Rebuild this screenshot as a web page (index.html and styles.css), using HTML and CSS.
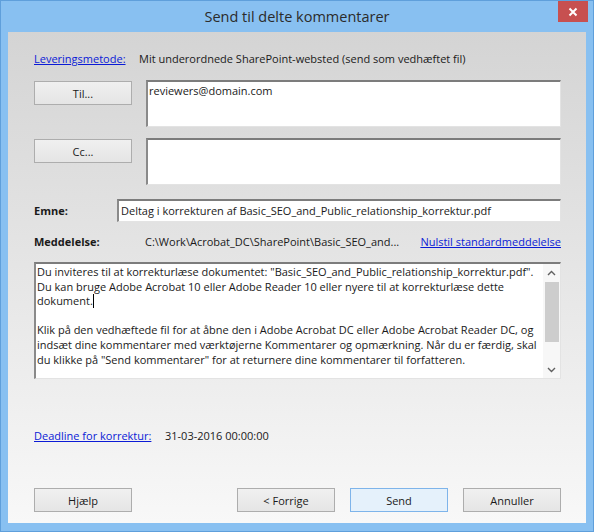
FILE: index.html
```html
<!DOCTYPE html>
<html lang="da">
<head>
<meta charset="utf-8">
<title>Send til delte kommentarer</title>
<link rel="stylesheet" href="styles.css">
</head>
<body>
<div class="window">
  <div class="titlebar">
    <div class="title">Send til delte kommentarer</div>
    <div class="close">
      <svg width="10" height="10" viewBox="0 0 10 10"><path d="M1.5 1.5 L8.5 8.5 M8.5 1.5 L1.5 8.5" stroke="#fff" stroke-width="2" fill="none"/></svg>
    </div>
  </div>
  <div class="client">
    <div class="delivery">
      <a class="link">Leveringsmetode:</a>
      <span class="value">Mit underordnede SharePoint-websted (send som vedhæftet fil)</span>
    </div>
    <div class="recip recip-to">
      <div class="btn">Til...</div>
      <div class="box tall"><span class="boxtext">reviewers@domain.com</span></div>
    </div>
    <div class="recip recip-cc">
      <div class="btn">Cc...</div>
      <div class="box tall"></div>
    </div>
    <div class="subject">
      <span class="label label-subj">Emne:</span>
      <div class="box single"><span class="boxtext">Deltag i korrekturen af Basic_SEO_and_Public_relationship_korrektur.pdf</span></div>
    </div>
    <div class="msghead">
      <span class="label label-msg">Meddelelse:</span>
      <span class="path">C:\Work\Acrobat_DC\SharePoint\Basic_SEO_and...</span>
      <a class="link">Nulstil standardmeddelelse</a>
    </div>
    <div class="message">
      <div class="msgtext">Du inviteres til at korrekturlæse dokumentet: "Basic_SEO_and_Public_relationship_korrektur.pdf".<br>Du kan bruge Adobe Acrobat 10 eller Adobe Reader 10 eller nyere til at korrekturlæse dette<br>dokument.<span class="caret"></span><br><br>Klik på den vedhæftede fil for at åbne den i Adobe Acrobat DC eller Adobe Acrobat Reader DC, og<br>indsæt dine kommentarer med værktøjerne Kommentarer og opmærkning. Når du er færdig, skal<br>du klikke på "Send kommentarer" for at returnere dine kommentarer til forfatteren.</div>
      <div class="scrollbar">
        <div class="arrow">
          <svg width="9" height="6" viewBox="0 0 9 6"><polyline points="1,5 4.5,1.5 8,5" stroke="#606060" stroke-width="1.4" fill="none"/></svg>
        </div>
        <div class="thumb"></div>
        <div class="track"></div>
        <div class="arrow">
          <svg width="9" height="6" viewBox="0 0 9 6"><polyline points="1,1 4.5,4.5 8,1" stroke="#606060" stroke-width="1.4" fill="none"/></svg>
        </div>
      </div>
    </div>
    <div class="deadline">
      <a class="link">Deadline for korrektur:</a>
      <span class="value">31-03-2016 00:00:00</span>
    </div>
    <div class="buttons">
      <div class="btn">Hjælp</div>
      <div class="spacer"></div>
      <div class="btn">&lt; Forrige</div>
      <div class="btn btn-default">Send</div>
      <div class="btn">Annuller</div>
    </div>
  </div>
</div>
</body>
</html>
```
FILE: styles.css
```css
html, body {
  margin: 0;
  padding: 0;
}
body {
  width: 594px;
  height: 532px;
  overflow: hidden;
  font-family: "Open Sans", "Noto Sans", sans-serif;
  font-size: 11px;
  color: #1a1a1a;
}
.window {
  width: 594px;
  height: 532px;
  box-sizing: border-box;
  background: #88c0f1;
  border: 1px solid #5f9fdb;
  display: flex;
  flex-direction: column;
}
.titlebar {
  height: 31px;
  position: relative;
  display: flex;
  align-items: center;
  justify-content: center;
}
.title {
  font-family: "Open Sans", "Noto Sans", sans-serif;
  font-size: 14.5px;
  color: #2b2b2b;
  margin-top: -1px;
}
.close {
  position: absolute;
  top: 0;
  right: 5px;
  width: 30px;
  height: 21px;
  background: #c75050;
  display: flex;
  align-items: center;
  justify-content: center;
}
.client {
  flex: 1;
  margin: 0 7px 8px 7px;
  background: linear-gradient(#d4d4d4, #f8f8f8);
  padding: 19px 25px 11px 26px;
  display: flex;
  flex-direction: column;
}
.link {
  color: #0b1bd6;
  text-decoration: underline;
  cursor: pointer;
}
.delivery {
  display: flex;
  line-height: 16px;
  height: 16px;
}
.delivery .link {
  width: 105px;
}
.recip {
  display: flex;
  align-items: flex-start;
  gap: 14px;
}
.recip-to {
  margin-top: 13px;
}
.recip-cc {
  margin-top: 11px;
}
.recip .btn {
  margin-top: 1px;
}
.btn {
  width: 98px;
  height: 24px;
  box-sizing: border-box;
  border: 1px solid #adadad;
  background: linear-gradient(#f0f0f0, #e5e5e5);
  display: flex;
  align-items: center;
  justify-content: center;
  color: #1a1a1a;
}
.btn-default {
  background: #e5f1fb;
  border-color: #7eb4ea;
}
.box {
  flex: 1;
  box-sizing: border-box;
  background: #fff;
  border-top: 2px solid #7c7c7c;
  border-left: 2px solid #8a8a8a;
  border-right: 1px solid #e3e3e3;
  border-bottom: 1px solid #e3e3e3;
}
.box.tall {
  height: 47px;
  padding: 1px 0 0 1px;
  line-height: 16px;
}
.box.single {
  height: 23px;
  padding: 0 0 0 2px;
  line-height: 20px;
}
.subject {
  display: flex;
  margin-top: 14px;
  align-items: center;
}
.label {
  font-weight: bold;
}
.label-subj {
  width: 83px;
}
.msghead {
  display: flex;
  margin-top: 12px;
  line-height: 16px;
  height: 16px;
}
.label-msg {
  width: 111px;
}
.path {
  flex: 1;
}
.message {
  margin-top: 12px;
  height: 117px;
  box-sizing: border-box;
  background: #fff;
  border-top: 2px solid #7c7c7c;
  border-left: 2px solid #8a8a8a;
  border-right: 1px solid #e3e3e3;
  border-bottom: 1px solid #e3e3e3;
  display: flex;
}
.msgtext {
  flex: 1;
  padding: 1px 0 0 1px;
  line-height: 14.6px;
  white-space: nowrap;
  overflow: hidden;
}
.caret {
  display: inline-block;
  width: 0;
  height: 14px;
  border-left: 1px solid #000;
  vertical-align: -3px;
}
.scrollbar {
  width: 17px;
  display: flex;
  flex-direction: column;
  background: #f7f7f7;
}
.arrow {
  height: 17px;
  display: flex;
  align-items: center;
  justify-content: center;
}
.thumb {
  height: 60px;
  margin: 1px 1px 0 2px;
  background: #cdcdcd;
}
.track {
  flex: 1;
}
.deadline {
  display: flex;
  margin-top: 49px;
  line-height: 16px;
  height: 16px;
}
.deadline .link {
  width: 131px;
}
.buttons {
  display: flex;
  margin-top: 44px;
  gap: 15px;
}
.spacer {
  flex: 1;
}
```
